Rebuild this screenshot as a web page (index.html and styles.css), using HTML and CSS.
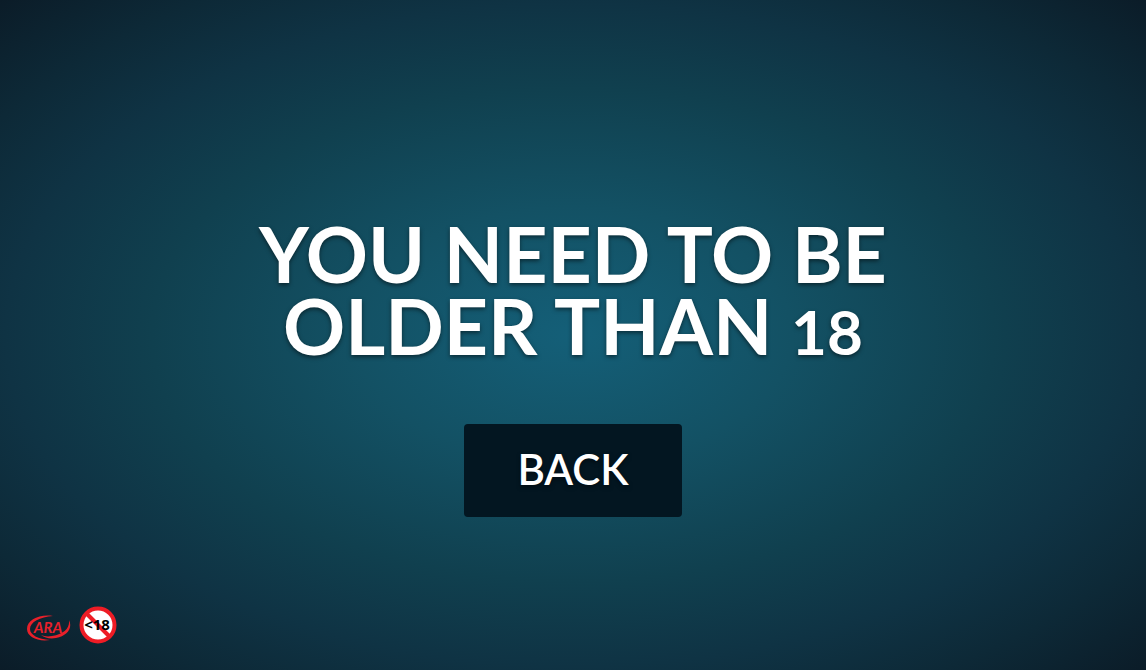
FILE: index.html
```html
<!DOCTYPE html>
<html lang="en">
<head>
<meta charset="utf-8">
<meta name="viewport" content="width=device-width, initial-scale=1">
<title>Age check</title>
<link rel="stylesheet" href="styles.css">
</head>
<body class="page">
<main class="gate">
  <h1 class="title">You need to be<br>older than <span class="age">18</span></h1>
  <button class="back" type="button">Back</button>
</main>
<footer class="badges">
  <svg class="ara" viewBox="0 0 44 26" role="img" aria-label="ARA">
    <path fill="#e8202a" d="M26 1C12-1 0 5 0 14c0 8 11 13 23 11C11 24 3 20 3 14 3 7 13 2 26 1Z"/>
    <path fill="#e8202a" d="M42 5c1 8-5 14-17 16-5 1-8 0-11-1 4 3 9 4 15 3C40 21 46 13 42 5Z"/>
    <text class="ara-text" x="21" y="18" text-anchor="middle">ARA</text>
  </svg>
  <svg class="limit" viewBox="0 0 38 38" role="img" aria-label="Not for under 18">
    <circle cx="19" cy="19" r="16.5" fill="#fff" stroke="#ee1c25" stroke-width="4"/>
    <path d="M7 7l24 24" stroke="#ee1c25" stroke-width="4"/>
    <text class="limit-text" x="18" y="24" text-anchor="middle">&lt;18</text>
  </svg>
</footer>
</body>
</html>
```
FILE: styles.css
```css
* { box-sizing: border-box; }

.page {
  margin: 0;
  min-height: 100vh;
  display: grid;
  grid-template-rows: 1fr auto;
  font-family: Lato, "Open Sans", sans-serif;
  color: #fff;
  background: radial-gradient(ellipse farthest-corner at center,
    #145f78 0%, #135164 27%, #10404f 52%, #0f3344 70%, #0d2937 84%, #0b1c28 100%) no-repeat #0b1c28;
}

.gate {
  display: flex;
  flex-direction: column;
  align-items: center;
  justify-content: center;
  gap: 62px;
  padding: 136px 24px 8px;
  text-align: center;
  text-transform: uppercase;
}

.title {
  margin: 0;
  font-size: 77px;
  line-height: 72px;
  font-weight: 700;
  text-shadow: 0 2px 4px rgba(0, 0, 0, 0.5);
}

.age { font-size: 62px; line-height: 62px; }

.back {
  padding: 18px 53px 21px;
  border: 0;
  border-radius: 4px;
  background: #031621;
  color: #fff;
  font: inherit;
  font-size: 42px;
  line-height: 54px;
  font-weight: 600;
  text-transform: uppercase;
  text-shadow: 0 2px 4px rgba(0, 0, 0, 0.5);
  cursor: pointer;
}

.badges {
  display: flex;
  align-items: center;
  gap: 8px;
  padding: 0 27px 26px;
}

.ara { width: 44px; height: 26px; margin-top: 6px; }
.limit { width: 38px; height: 38px; }

.ara-text {
  font: italic 700 15px Lato, sans-serif;
  fill: #e8202a;
}

.limit-text {
  font: 700 15px "Noto Sans", sans-serif;
  fill: #000;
}
```
